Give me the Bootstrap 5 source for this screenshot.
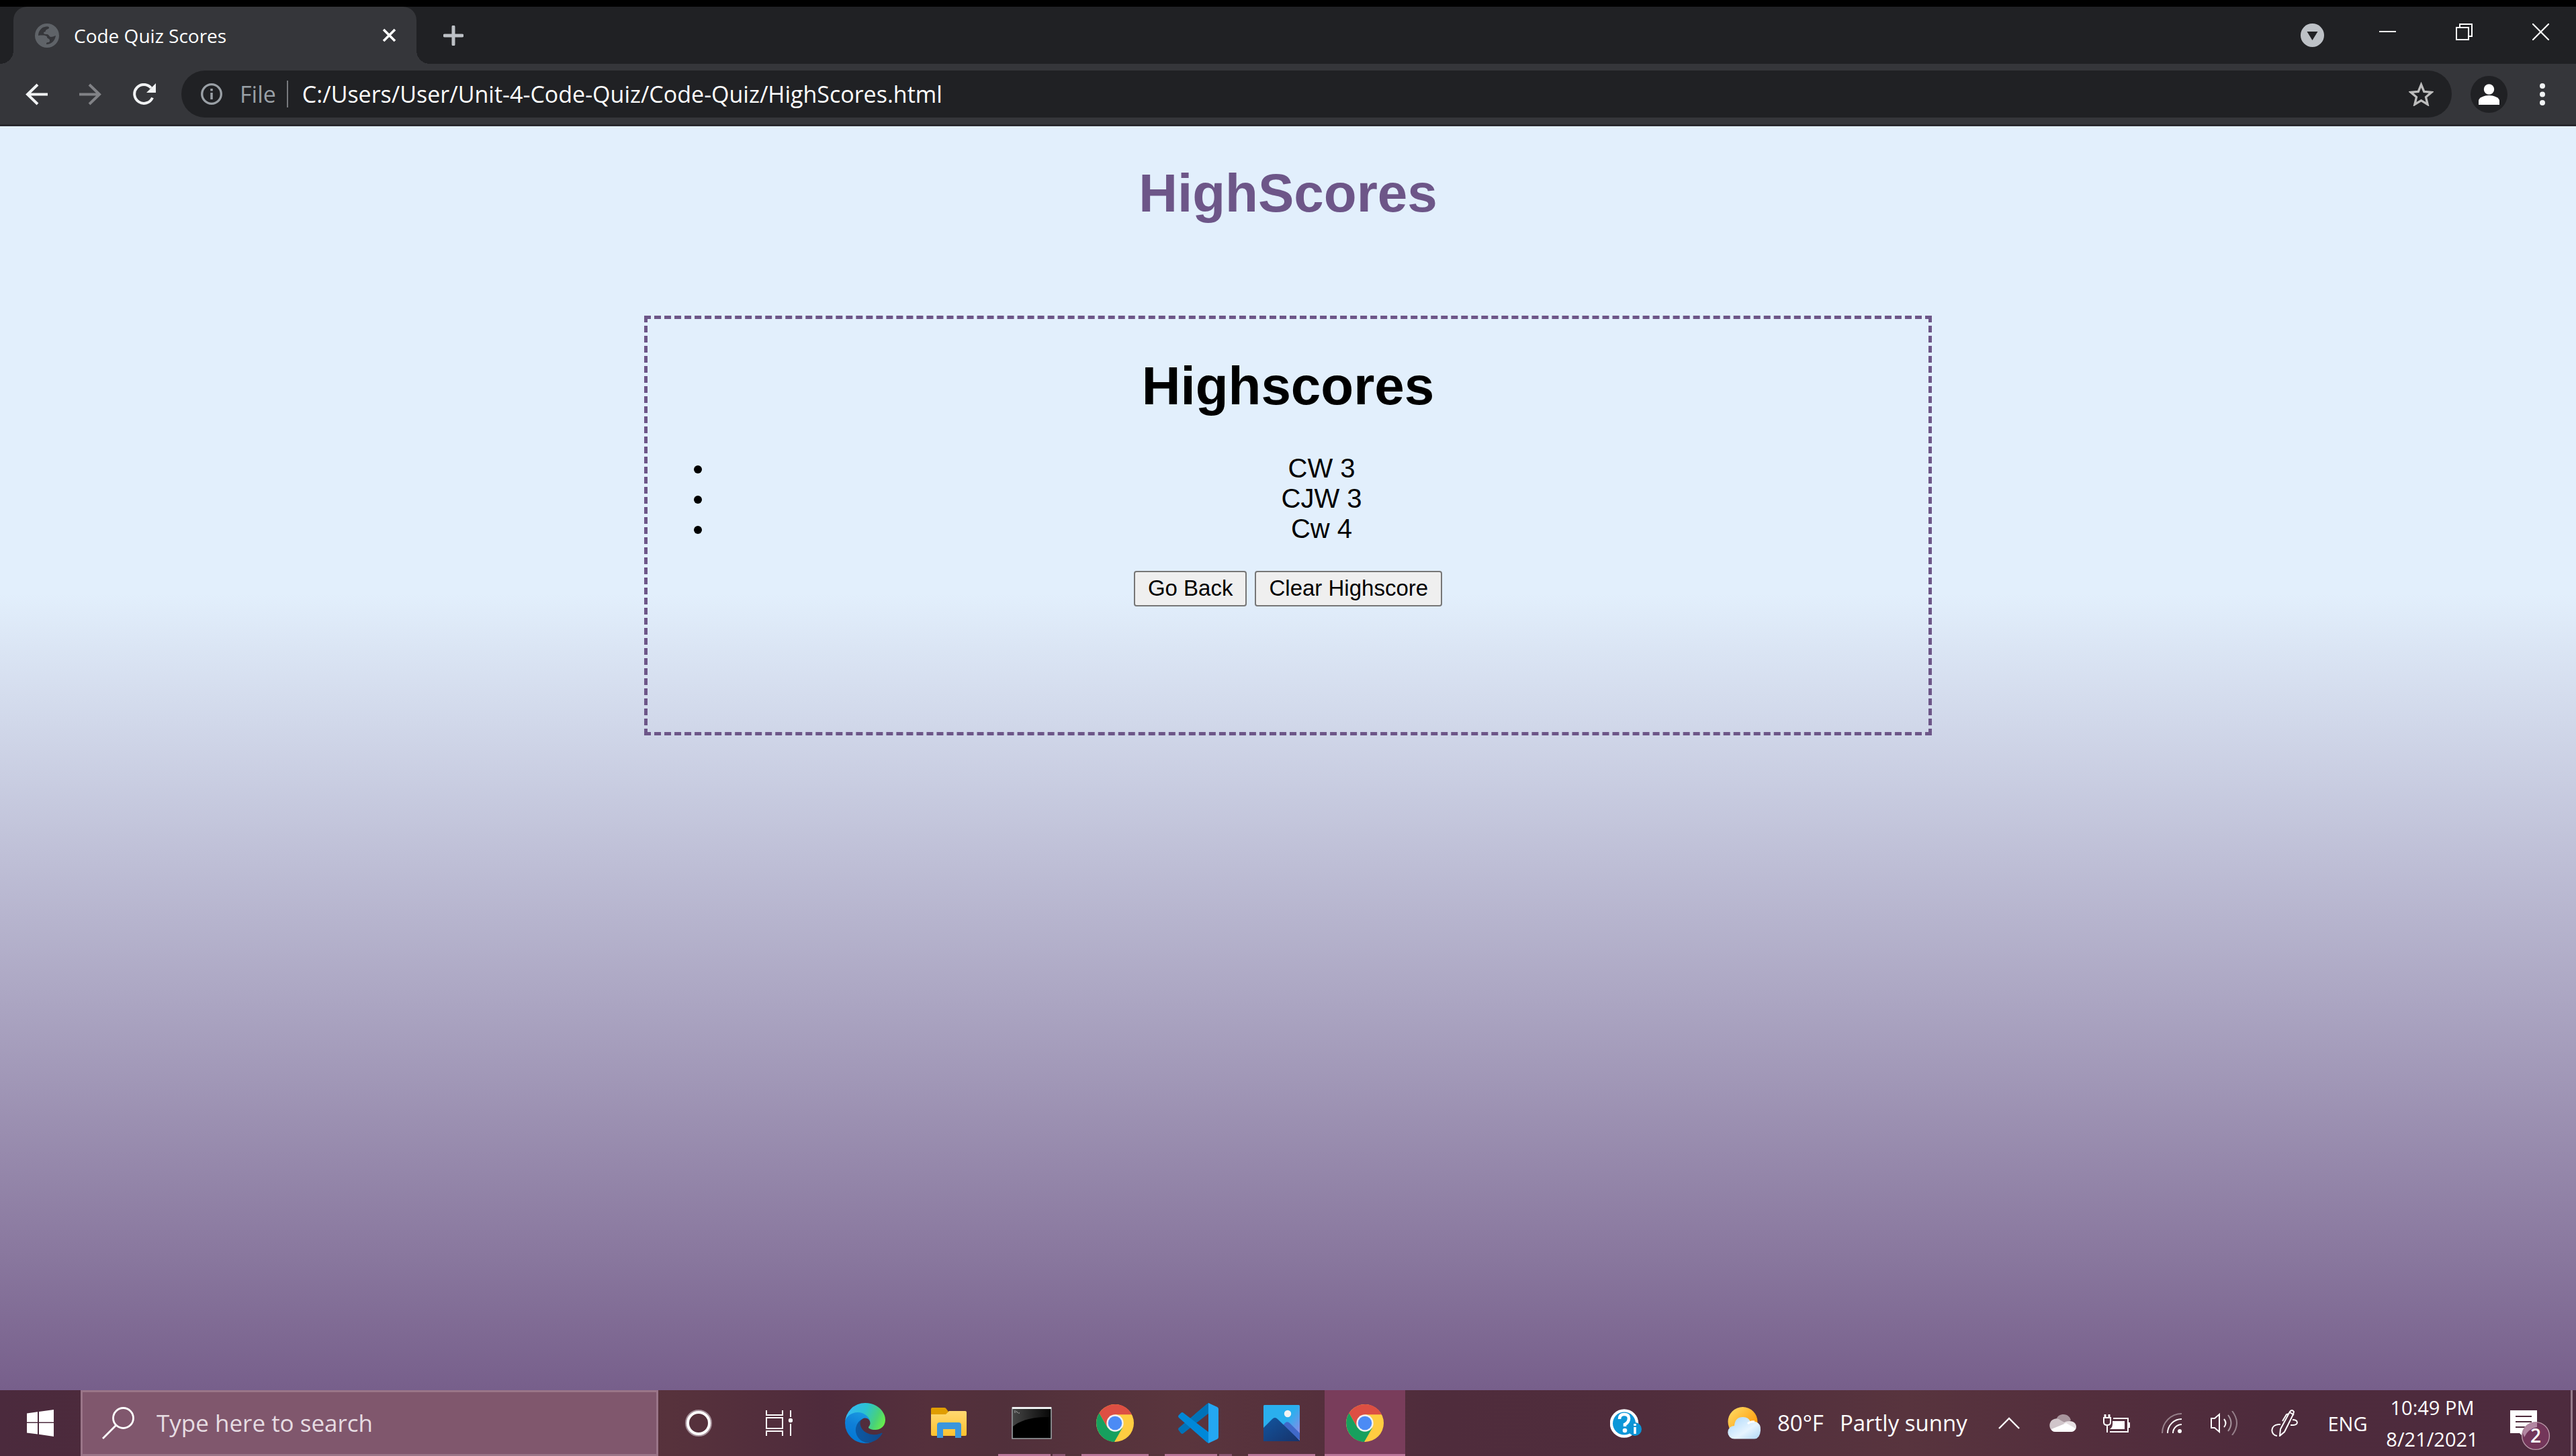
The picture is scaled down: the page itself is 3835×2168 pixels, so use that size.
<!DOCTYPE html>
<html lang="en">
<head>
<meta charset="utf-8">
<meta name="viewport" content="width=device-width, initial-scale=1">
<title>Code Quiz Scores</title>
<link rel="stylesheet" href="https://cdn.jsdelivr.net/npm/bootstrap@5.3.0/dist/css/bootstrap.min.css">
<style>
  :root { --strip: #202124; --bar: #35363a; --plum: #6d5688; --ui: "Open Sans", "Noto Sans", sans-serif; --page: "Liberation Sans", Arial, sans-serif; }
  body { font-family: var(--page); background: var(--strip); }
  svg { display: block; flex: none; }
  .plain { border: 0; background: none; padding: 0; color: #fff; display: flex; align-items: center; justify-content: center; flex: none; border-radius: 0; }

  /* Browser frame */
  .tabstrip { height: 95px; background: var(--strip); border-top: 10px solid #000; padding-left: 20px; font-family: var(--ui); }
  .tab { position: relative; width: 600px; background: var(--bar); border-radius: 20px 20px 0 0; padding: 0 30px 0 32px; gap: 22px; color: #fff; font-size: 28px; }
  .tab::before, .tab::after { content: ""; position: absolute; bottom: 0; width: 20px; height: 20px; }
  .tab::before { left: -20px; background: radial-gradient(circle at 0 0, transparent 20px, var(--bar) 20px); }
  .tab::after { right: -20px; background: radial-gradient(circle at 100% 0, transparent 20px, var(--bar) 20px); }
  .newtab { margin-left: 40px; }
  .winbtns { gap: 9px; margin-left: 42px; }
  .winbtn { width: 105px; height: 74px; }
  .toolbar { height: 93px; background: var(--bar); border-bottom: 3px solid #27272b; padding: 0 46px 0 38px; font-family: var(--ui); }
  .navbtns { gap: 47px; margin-right: 37px; }
  .omnibox { height: 70px; background: var(--strip); border-radius: 35px; padding: 0 27px 0 29px; font-size: 34px; }
  .scheme { color: #9aa0a6; margin-left: 26px; }
  .rule { width: 2px; height: 40px; background: #77797d; margin: 0 21px 0 16px; }
  .address { border: 0; background: none; color: #fff; padding: 0; min-width: 0; outline: 0; }
  .avatar { width: 55px; height: 55px; border-radius: 50%; background: var(--strip); margin: 0 48px 0 28px; }

  /* Quiz page */
  .quiz { background: linear-gradient(#e2effc 37%, #775f8b); color: #000; text-align: center; }
  .quiz h1 { font-size: 80px; line-height: 92px; font-weight: 700; margin: 54px 0; }
  .title { color: var(--plum); }
  .board { width: 50%; min-height: 625px; margin: 136px auto 0; border: 5px dashed var(--plum); }
  .scores { font-size: 40px; line-height: 45px; padding-left: 100px; margin: 0 0 40px; }
  .key { font-size: 33px; line-height: 37px; padding: 5px 19px 7px; border: 2px solid #767676; border-radius: 4px; background: #efefef; color: #000; }

  /* Desktop taskbar */
  .taskbar { height: 98px; font-family: var(--ui); color: #fff; background: linear-gradient(90deg, #4b2a3d, #4e2b3b 8%, #57323c 26%, #4f2b3c 32%, #55303c 36%, #51303b 39%, #5a353d 46%, #55303c 51%, #4f2c3c 56%, #502d3c 64%, #58343e 74%, #542f3d 80%, #4e2b3c 88%, #4d2b3e); }
  .start { width: 120px; }
  .finder { width: 860px; background: #80576d; border: 3px solid #9a7588; padding: 0 29px; gap: 33px; }
  .finder input { border: 0; background: none; outline: 0; padding: 0; color: #fff; font-size: 35px; min-width: 0; }
  .finder input::placeholder { color: #e6dce2; opacity: 1; }
  .slot { width: 120px; }
  .apps { gap: 4px; margin-left: 8px; }
  .app { position: relative; }
  .app.running::after { content: ""; position: absolute; bottom: 0; left: 10px; right: 10px; height: 3px; background: #b87699; }
  .app.stacked::after { background: linear-gradient(90deg, #b87699 78px, #58343f 78px 81px, #8d5874 81px); }
  .app.active { background: #793d5b; }
  .app.active::after { left: 0; right: 0; }
  .weather { width: 379px; margin-left: 92px; font-size: 33px; justify-content: flex-start; }
  .weather span { margin-left: 24px; }
  .tray { width: 80px; }
  .tray-net { width: 84px; }
  .tray-vol { width: 72px; }
  .tray-pen { width: 108px; }
  .clock { width: 172px; }
  .notes { padding-top: 22px; }
  .small-ui { font-size: 29px; line-height: 47px; }
  .peek { width: 8px; border-left: 3px solid #957b89; }
</style>
<script src="https://cdn.jsdelivr.net/npm/bootstrap@5.3.0/dist/js/bootstrap.bundle.min.js"></script>
</head>
<body class="d-flex flex-column min-vh-100 m-0">

<header>
  <div class="tabstrip d-flex">
    <div class="tab d-flex align-items-center">
      <svg width="36" height="36" viewBox="0 0 36 36"><circle cx="18" cy="18" r="18" fill="#5f6368"/><path d="M15 5c4-1 6 0 6 1 0 3-5 2-5 5 0 2-3 1-3 3s3 2 5 2c3 0 3 4 6 4 2 0 4-1 7-2-1 7-6 13-14 13 0-2 0-3 3-3 2 0 2-2 2-3 0-3-4-2-4-5 0-2-6-3-13-2C5 12 9 6 15 5z" fill="#35363a"/></svg>
      <span class="flex-grow-1">Code Quiz Scores</span>
      <button class="plain" aria-label="Close tab"><svg width="21" height="21" viewBox="0 0 21 21"><path d="M2 2l17 17M19 2L2 19" stroke="#fff" stroke-width="3.600"/></svg></button>
    </div>
    <button class="plain newtab" aria-label="New tab"><svg width="30" height="30" viewBox="0 0 30 30"><path d="M15 2v26M2 15h26" stroke="#bdc1c6" stroke-width="5" stroke-linecap="round"/></svg></button>
    <button class="plain ms-auto" aria-label="Search tabs"><svg width="35" height="35" viewBox="0 0 35 35"><circle cx="17.500" cy="17.500" r="17.500" fill="#bdc1c6"/><path d="M9.500 12h16l-8 13z" fill="#202124"/></svg></button>
    <div class="winbtns d-flex">
      <button class="plain winbtn" aria-label="Minimize"><svg width="25" height="25" viewBox="0 0 25 25"><path d="M0 12h25" stroke="#fff" stroke-width="2"/></svg></button>
      <button class="plain winbtn" aria-label="Restore"><svg width="25" height="25" viewBox="0 0 25 25"><path d="M1 6h18v18H1zM6 6V1h18v18h-5" fill="none" stroke="#fff" stroke-width="2"/></svg></button>
      <button class="plain winbtn" aria-label="Close"><svg width="25" height="25" viewBox="0 0 25 25"><path d="M0 0l25 25M25 0L0 25" stroke="#fff" stroke-width="2.200"/></svg></button>
    </div>
  </div>

  <div class="toolbar d-flex align-items-center">
    <div class="navbtns d-flex">
      <button class="plain" aria-label="Back"><svg width="33" height="33" viewBox="0 0 33 33"><path d="M33 16.500H3M18 2L3 16.500 18 31" fill="none" stroke="#f1f3f4" stroke-width="4"/></svg></button>
      <button class="plain" aria-label="Forward"><svg width="33" height="33" viewBox="0 0 33 33"><path d="M0 16.500h30M15 2l15 14.500L15 31" fill="none" stroke="#818286" stroke-width="4"/></svg></button>
      <button class="plain" aria-label="Reload"><svg width="35" height="33" viewBox="0 0 35 33"><path d="M29 21.500A14 14 0 1 1 27 7" fill="none" stroke="#f1f3f4" stroke-width="4"/><path d="M34 0v14H20z" fill="#f1f3f4"/></svg></button>
    </div>
    <div class="omnibox d-flex align-items-center flex-grow-1">
      <svg width="32" height="32" viewBox="0 0 32 32"><circle cx="16" cy="16" r="14.300" fill="none" stroke="#9aa0a6" stroke-width="3.300"/><path d="M16 14v10M16 8v3.500" stroke="#9aa0a6" stroke-width="3.500"/></svg>
      <label class="scheme" for="address">File</label>
      <span class="rule"></span>
      <input class="address flex-grow-1" id="address" type="text" value="C:/Users/User/Unit-4-Code-Quiz/Code-Quiz/HighScores.html">
      <button class="plain" aria-label="Bookmark"><svg width="37" height="36" viewBox="0 0 37 36"><path d="M18.500 4l4.300 10.400 11.200.900-8.500 7.300 2.600 10.900-9.600-5.800-9.600 5.800 2.600-10.900L3 15.300l11.200-.900z" fill="none" stroke="#bdbdbd" stroke-width="3.300"/></svg></button>
    </div>
    <button class="plain avatar" aria-label="Profile"><svg width="31" height="31" viewBox="0 0 31 31"><circle cx="15.500" cy="8" r="7.700" fill="#fff"/><path d="M0 31v-6c0-5 9-8 15.500-8S31 20 31 25v6z" fill="#fff"/></svg></button>
    <button class="plain" aria-label="Menu"><svg width="8" height="33" viewBox="0 0 8 33"><g fill="#f1f3f4"><circle cx="4" cy="4" r="4"/><circle cx="4" cy="16.500" r="4"/><circle cx="4" cy="29" r="4"/></g></svg></button>
  </div>
</header>

<main class="quiz flex-grow-1 overflow-hidden">
  <h1 class="title">HighScores</h1>
  <section class="board overflow-hidden">
    <h1>Highscores</h1>
    <ul class="scores">
      <li>CW 3</li>
      <li>CJW 3</li>
      <li>Cw 4</li>
    </ul>
    <div class="d-flex justify-content-center gap-2">
      <button class="key">Go Back</button>
      <button class="key ms-1">Clear Highscore</button>
    </div>
  </section>
</main>

<footer class="taskbar d-flex">
  <button class="plain start" aria-label="Start"><svg width="40" height="40" viewBox="0 0 40 40"><path d="M0 5.500l16-2.300V18.500H0zM18 3l22-3v18.500H18zM0 20h16v16.500L0 34.500zM18 20h22v20l-22-3.200z" fill="#fff"/></svg></button>
  <div class="finder d-flex align-items-center">
    <svg width="48" height="48" viewBox="0 0 48 48"><circle cx="31.500" cy="16.500" r="15" fill="none" stroke="#fff" stroke-width="2.800"/><path d="M21 27L1 47" stroke="#fff" stroke-width="2.800"/></svg>
    <input class="flex-grow-1" type="text" aria-label="Search" placeholder="Type here to search">
  </div>
  <button class="plain slot" aria-label="Cortana"><svg width="40" height="40" viewBox="0 0 40 40"><circle cx="20" cy="20" r="18.500" fill="none" stroke="#a58f99" stroke-width="3"/><circle cx="20" cy="20" r="16" fill="none" stroke="#fff" stroke-width="4"/></svg></button>
  <button class="plain slot" aria-label="Task view"><svg width="40" height="38" viewBox="0 0 40 38"><path d="M1 0v7h24V0M1 11h24v16H1zM1 38v-7h24v7M37 0v10M37 20v18" fill="none" stroke="#fff" stroke-width="2"/><circle cx="37" cy="15" r="3.200" fill="#fff"/></svg></button>

  <div class="apps d-flex">
    <button class="plain slot app" aria-label="Edge"><svg width="60" height="60" viewBox="0 0 256 256">
      <defs>
        <linearGradient id="eDark" x1="0" x2="1"><stop offset="0" stop-color="#0c59a4"/><stop offset="1" stop-color="#114a8b"/></linearGradient>
        <linearGradient id="eBlue" x1=".7" y1="0" x2=".3" y2="1"><stop offset="0" stop-color="#1b9de2"/><stop offset=".5" stop-color="#0f7fd8"/><stop offset="1" stop-color="#0078d4"/></linearGradient>
        <linearGradient id="eGreen" x1="0" y1=".3" x2="1" y2=".6"><stop offset="0" stop-color="#35b7f8"/><stop offset=".45" stop-color="#2bc3d2"/><stop offset=".8" stop-color="#4ad277"/><stop offset="1" stop-color="#66eb4f"/></linearGradient>
      </defs>
      <path fill="url(#eDark)" d="M231 190.500c-3.400 1.800-6.900 3.400-10.500 4.700a101.500 101.500 0 0 1-35.900 6.500c-47.300 0-88.500-32.500-88.500-74.300a31.500 31.500 0 0 1 16.400-27.300c-42.800 1.800-53.800 46.400-53.800 72.500 0 73.900 68.100 81.400 82.800 81.400 7.900 0 19.800-2.300 27-4.600l1.300-.4a128.300 128.300 0 0 0 66.600-52.800 4 4 0 0 0-5.400-5.700Z"/>
      <path fill="url(#eBlue)" d="M105.700 241.400a79.200 79.200 0 0 1-22.700-21.300 80.700 80.700 0 0 1 29.500-120c3.200-1.500 8.500-4.100 15.600-4a32.400 32.400 0 0 1 25.700 13 31.900 31.900 0 0 1 6.300 18.700c0-.2 24.500-79.600-80-79.600-43.900 0-80 41.600-80 78.200a130.200 130.200 0 0 0 12.100 56 128 128 0 0 0 156.400 67 75.500 75.500 0 0 1-62.800-8Z"/>
      <path fill="url(#eGreen)" d="M152.300 148.900c-.9 1-3.300 2.500-3.300 5.700 0 2.600 1.700 5.100 4.700 7.200 14.400 10 41.500 8.700 41.600 8.700 10.700 0 21.100-2.900 30.300-8.300a61.400 61.400 0 0 0 30.400-52.900c.3-22.400-8-37.300-11.300-43.900C223.500 23.900 177.700 0 128 0A128 128 0 0 0 0 126.200c.5-36.500 36.800-66 80-66 3.500 0 23.500.3 42 10 16.300 8.600 24.900 18.900 30.800 29.200 6.200 10.700 7.300 24.100 7.300 29.500 0 5.300-2.700 13.300-7.800 20Z"/>
    </svg></button>
    <button class="plain slot app" aria-label="File Explorer"><svg width="54" height="46" viewBox="0 0 54 46">
      <defs><linearGradient id="fo" x1="0" y1="0" x2="0" y2="1"><stop offset="0" stop-color="#ffd971"/><stop offset="1" stop-color="#fdc12f"/></linearGradient></defs>
      <path d="M1 10V2q0-2 2-2h18q2 0 3 2l3 4v5H1z" fill="#e09d00"/><path d="M1 10h22l5-5h24q2 0 2 2v33q0 2-2 2H3q-2 0-2-2z" fill="url(#fo)"/><path d="M10 45V26q0-4 4-4h28q4 0 4 4v19h-9V32H19v13z" fill="#3a96dd"/>
    </svg></button>
    <button class="plain slot app running stacked" aria-label="Command Prompt"><svg width="60" height="48" viewBox="0 0 60 48">
      <defs><linearGradient id="cm" x1="0" x2="1"><stop offset="0" stop-color="#444"/><stop offset="1" stop-color="#070707"/></linearGradient></defs>
      <path d="M1 1h58v46H1z" fill="#000" stroke="#9aa0a3" stroke-width="1.600"/><path d="M2 3h56v12Q20 14 2 29z" fill="url(#cm)"/><path d="M1 0h58v3H1z" fill="#eef0f1"/><path d="M4 6h2M4 8h2M7 6l2 3M10 9h2" stroke="#aaa" stroke-width="1"/>
    </svg></button>
    <button class="plain slot app running" aria-label="Chrome"><svg width="56" height="56" viewBox="0 0 56 56">
      <g id="chrome"><circle cx="28" cy="28" r="28" fill="#ffcd41"/><path d="M4.500 13A28 28 0 0 0 27 56l12-21H17z" fill="#17a05e"/><path d="M4.500 13A28 28 0 0 1 53 15.300H28L17 35z" fill="#dd4f43"/><circle cx="28" cy="28" r="12.700" fill="#f1f1f1"/><circle cx="28" cy="28" r="10.300" fill="#4c8bf5"/></g>
    </svg></button>
    <button class="plain slot app running stacked" aria-label="Visual Studio Code"><svg width="60" height="60" viewBox="0 0 60 60">
      <path d="M1 37q-2 2 0 4l3 4q2 2 4 0l38-30V0q-2 0-4 2z" fill="#0072b8"/><path d="M1 22q-2-2 0-4l3-3q2-2 4 0l38 29v16q-2 0-4-2z" fill="#0088d8"/><path d="M45 0l13 6q2 1 2 3v42q0 2-2 3l-13 6z" fill="#24a7f2"/>
    </svg></button>
    <button class="plain slot app running" aria-label="Photos"><svg width="54" height="54" viewBox="0 0 54 54">
      <defs><linearGradient id="ps" x1=".3" y1=".3" x2="1" y2=".8"><stop offset=".4" stop-color="#2aafee"/><stop offset="1" stop-color="#8f8ae6"/></linearGradient><linearGradient id="pm" x1="0" y1="0" x2="1" y2="1"><stop offset="0" stop-color="#12559f"/><stop offset="1" stop-color="#17336b"/></linearGradient></defs>
      <rect width="54" height="54" rx="1.500" fill="url(#ps)"/><path d="M29 30l4-4q3-2 6 1l15 15v10L30 34z" fill="#4069c9"/><path d="M0 34l13-13q4-4 8 0l33 32v1H0z" fill="url(#pm)"/><circle cx="36" cy="13" r="5.200" fill="#f3f3f3"/>
    </svg></button>
    <button class="plain slot app running active" aria-label="Chrome window"><svg width="56" height="56" viewBox="0 0 56 56"><use href="#chrome"/></svg></button>
  </div>

  <button class="plain slot ms-auto" aria-label="Help"><svg width="47" height="43" viewBox="0 0 47 43">
    <circle cx="21" cy="21.500" r="21.300" fill="#fff"/><circle cx="21" cy="21.500" r="17" fill="#0c97d8"/><path d="M14 15q0-7 7-7t7 6-6 9v3" fill="none" stroke="#fff" stroke-width="4.600"/><circle cx="22" cy="32" r="3.300" fill="#fff"/><circle cx="37" cy="30" r="10" fill="#0c93d4"/><path d="M37 27v10M37 22v3" stroke="#fff" stroke-width="3.600"/>
  </svg></button>
  <button class="plain weather">
    <svg width="50" height="48" viewBox="0 0 50 48">
      <defs><linearGradient id="su" x1="0" y1="0" x2="1" y2="1"><stop offset=".1" stop-color="#ffd75e"/><stop offset=".8" stop-color="#ff9a0a"/></linearGradient><linearGradient id="cl" x1="0" y1="0" x2="1" y2="1"><stop offset="0" stop-color="#a9d6fa"/><stop offset=".6" stop-color="#e6f4ff"/><stop offset="1" stop-color="#aed6f5"/></linearGradient></defs>
      <circle cx="22.500" cy="22" r="22" fill="url(#su)"/><path d="M10 47.500A9.500 9.500 0 0 1 10 28q1-13 13-13 8 0 11 7 4-1 8 0 8 3 7 13-1 12-9 12.500z" fill="url(#cl)"/><path d="M30 25q4-4 10-3" fill="none" stroke="#fff" stroke-width="3"/>
    </svg>
    <span>80°F</span><span>Partly sunny</span>
  </button>
  <button class="plain tray" aria-label="Show hidden icons"><svg width="32" height="18" viewBox="0 0 32 18"><path d="M1 17L16 2l15 15" fill="none" stroke="#fff" stroke-width="2.400"/></svg></button>
  <button class="plain tray" aria-label="OneDrive"><svg width="40" height="26" viewBox="0 0 40 26"><path d="M10 8C12 2 16 0 21 0c6 0 10 4 11 9l-12 5z" fill="#a8959d"/><path d="M8 26C-2 24-2 10 7 7q6-2 10 2l9 5-20 10z" fill="#d0c5ca"/><path d="M21 13q3-3 9-3c13 0 13 16 2 16z" fill="#e6dfe2"/><path d="M3 22l22-9 14 8q-2 5-8 5H9q-5 0-6-4z" fill="#fff"/></svg></button>
  <button class="plain tray" aria-label="Battery"><svg width="40" height="27" viewBox="0 0 40 27"><path d="M15 6h22v20H10" fill="none" stroke="#fff" stroke-width="2"/><path d="M14 10h18v12H10q5-3 4-12zM38 12h2v8h-2z" fill="#fff"/><path d="M3 0v5M9 0v5" stroke="#fff" stroke-width="3"/><path d="M1 5h10v7q0 4-5 4t-5-4zM6 16v11" fill="none" stroke="#fff" stroke-width="2"/></svg></button>
  <button class="plain tray-net" aria-label="Network"><svg width="30" height="30" viewBox="0 0 30 30"><g fill="none" stroke="#fff" stroke-width="2"><path d="M1 30A29 29 0 0 1 30 1" opacity=".4"/><path d="M9 30A21 21 0 0 1 30 9M17 30a13 13 0 0 1 13-13"/></g><circle cx="27" cy="27" r="3" fill="#fff"/></svg></button>
  <button class="plain tray-vol" aria-label="Volume"><svg width="40" height="36" viewBox="0 0 40 36"><g fill="none" stroke="#fff" stroke-width="2"><path d="M1 11h5l7-6v26l-7-6H1z"/><path d="M20 12q5 6 0 12" /><path d="M26 6q9 12 0 24" opacity=".5"/><path d="M32 0q14 18 0 36" opacity=".4"/></g></svg></button>
  <button class="plain tray-pen" aria-label="Windows Ink"><svg width="40" height="40" viewBox="0 0 40 40"><g fill="none" stroke="#fff" stroke-width="2"><path d="M14 22H11C-2 23-1 38 9 39M32 15c9 0 9 8 1 8h-4"/><path d="M13 39l1-10L28 3q3-4 6 0L33 7 20 33zM17 17l6-10 4-1M28 4l6 4"/></g></svg></button>
  <button class="plain tray small-ui">ENG</button>
  <button class="plain small-ui clock"><span>10:49 PM<br>8/21/2021</span></button>
  <button class="plain slot notes" aria-label="2 notifications"><svg width="60" height="60" viewBox="0 0 60 60">
    <path d="M0 0h40v34H20v6l-6-6H0z" fill="#fff"/><path d="M8 9h24M8 17h24M8 25h17" stroke="#4e2b3c" stroke-width="2"/><circle cx="38" cy="38" r="20.400" fill="#73365a" stroke="#b898a8" stroke-width="1.400"/><path d="M19 34A19 19 0 0 1 40 18v7Q27 27 21 40z" fill="#b286a1"/><text x="38" y="48" text-anchor="middle" font-family="Open Sans" font-weight="600" font-size="28" fill="#fff">2</text>
  </svg></button>
  <div class="peek"></div>
</footer>
</body>
</html>
